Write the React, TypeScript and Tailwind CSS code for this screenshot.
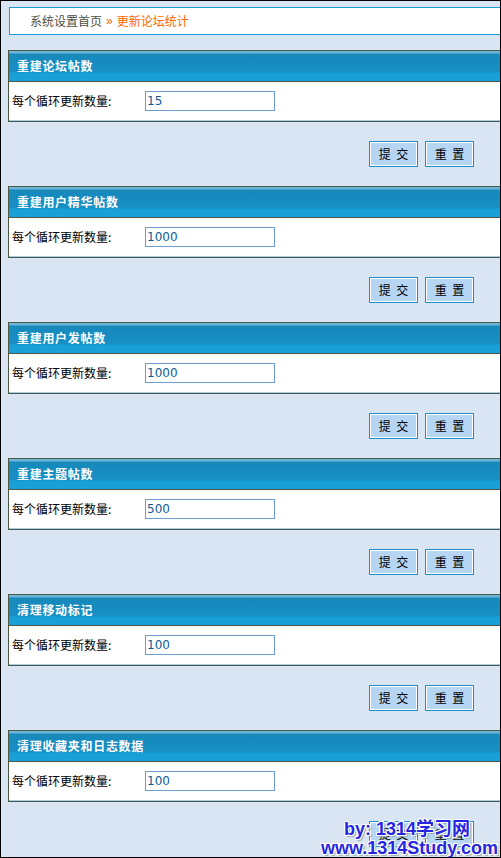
import React from "react";

const sections = [
  { title: "重建论坛帖数", value: "15" },
  { title: "重建用户精华帖数", value: "1000" },
  { title: "重建用户发帖数", value: "1000" },
  { title: "重建主题帖数", value: "500" },
  { title: "清理移动标记", value: "100" },
  { title: "清理收藏夹和日志数据", value: "100" },
];

const cjk = "font-['SimSun','Noto_Sans_CJK_SC','Noto_Sans',sans-serif]";

function Section({ title, value }: { title: string; value: string }) {
  return (
    <div>
      <div className="ml-[7px] border-l border-t border-b border-[#4b5844] bg-white">
        <div className="h-[31px] border-b border-[#4b5844] bg-[linear-gradient(to_bottom,#6ab6d8_0px,#6ab6d8_2px,#1788bb_3px,#1890c4_21px,#1aa0d8_22px,#1aa0d8_100%)] flex items-center pl-[8px]">
          <span className={`text-[12px] font-bold text-white leading-none tracking-[0.7px] ${cjk}`}>{title}</span>
        </div>
        <div className="h-[39px] border-b border-[#a8cbe6] flex items-center">
          <div className={`w-[136px] pl-[3px] text-[12px] text-black leading-none ${cjk}`}>每个循环更新数量:</div>
          <div className="w-[130px] h-[20px] border border-[#6b9bcf] bg-white flex items-center pl-[1px]">
            <span className="text-[12px] text-[#0f5d96] leading-none font-['DejaVu_Sans','Liberation_Sans',sans-serif]">{value}</span>
          </div>
        </div>
      </div>
      <div className="h-[64px] pt-[19px] pr-[26px] flex justify-end gap-[7px]">
        <Btn label="提  交" />
        <Btn label="重  置" />
      </div>
    </div>
  );
}

function Btn({ label }: { label: string }) {
  return (
    <div className="w-[49px] h-[26px] border border-[#1d8ec6] bg-[#b6d5f2] shadow-[inset_0_0_0_1px_#ffffff] flex items-center justify-center">
      <span className={`text-[12px] text-black leading-none whitespace-pre ${cjk}`}>{label}</span>
    </div>
  );
}

export default function App() {
  return (
    <div className="relative w-[501px] h-[858px] overflow-hidden border border-black bg-[#dae5f3]">
      <div className="mt-[6px] ml-[8px] h-[28px] border-l border-t border-b border-[#1a9ad6] bg-white flex items-center pl-[20px]">
        <span className={`text-[12px] leading-none text-[#505040] ${cjk}`}>系统设置首页</span>
        <span className="text-[12px] leading-none text-[#ff6600] mx-[4px] font-['Liberation_Sans',sans-serif]">»</span>
        <span className={`text-[12px] leading-none text-[#ff6600] ${cjk}`}>更新论坛统计</span>
      </div>
      <div className="mt-[15px]">
        {sections.map((s) => (
          <Section key={s.title} title={s.title} value={s.value} />
        ))}
      </div>
      <div className="absolute right-[2px] bottom-[1px] flex flex-col items-end leading-none font-['Liberation_Sans','Noto_Sans_CJK_SC',sans-serif] font-bold text-[18px] text-[#2626e0] [text-shadow:1px_1px_0_#fff,-1px_-1px_0_#fff,1px_-1px_0_#fff,-1px_1px_0_#fff,2px_2px_1px_#9aa]">
        <span className="mr-[28px] h-[19px]">by: 1314学习网</span>
        <span className="h-[17px]">www.1314Study.com</span>
      </div>
    </div>
  );
}
